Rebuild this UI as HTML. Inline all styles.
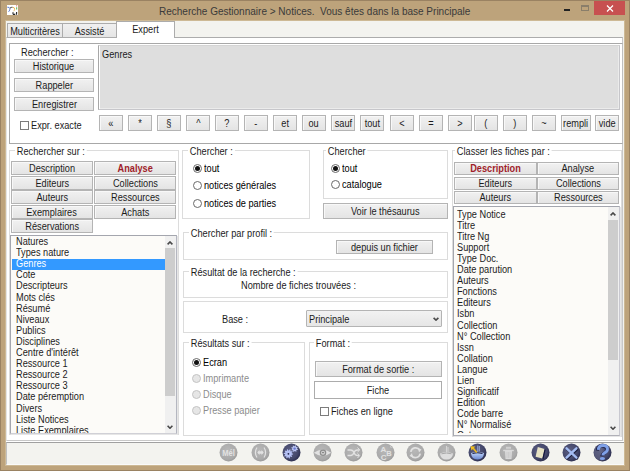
<!DOCTYPE html>
<html><head><meta charset="utf-8"><style>
html,body{margin:0;padding:0;width:630px;height:471px;overflow:hidden;background:#bda37b;}
body div, body svg{position:absolute;box-sizing:border-box;}
.t{font-family:"Liberation Sans", sans-serif;font-size:10px;line-height:11px;color:#1c1c1c;white-space:nowrap;transform:scaleX(0.92);transform-origin:0 0;}
.c{transform-origin:50% 0;}
.btn span{display:inline-block;transform:scaleX(0.92);}
.btn{border:1px solid #b4b4b4;background:linear-gradient(#f1f1f1,#e4e4e4);box-shadow:inset 1px 1px 0 #f8f8f8;font-family:"Liberation Sans", sans-serif;font-size:10px;text-align:center;color:#1c1c1c;white-space:nowrap;overflow:hidden;}
</style></head><body>
<div style="left:0;top:0;width:630px;height:471px;background:#bda37b;"></div>
<div style="left:0;top:0;width:630px;height:471px;border:1px solid #9a8262;"></div>
<div class="t" style="left:159px;top:4px;font-size:11px;line-height:14px;color:#3a3a3a;transform-origin:0 0;transform:scaleX(0.91);white-space:nowrap;">Recherche Gestionnaire &gt; Notices.&nbsp; Vous êtes dans la base Principale</div>
<div style="left:564px;top:9px;width:6px;height:2px;background:#222;"></div>
<div style="left:581px;top:5px;width:8px;height:6px;border:1px solid #8a7e6a;border-top-width:2px;"></div>
<div style="left:594px;top:1px;width:31px;height:14px;background:#c75050;"></div>
<svg style="position:absolute;left:606px;top:4.5px" width="8" height="7" viewBox="0 0 8 7"><path d="M1 0.5 L7 6.5 M7 0.5 L1 6.5" stroke="#fff" stroke-width="1.2"/></svg>
<div style="left:5px;top:20px;width:620px;height:446px;border:1px solid #cdb995;"></div>
<div style="left:6px;top:21px;width:618px;height:444px;background:#f3f3ef;"></div>
<div style="left:6px;top:37px;width:617px;height:404px;background:#fff;border-top:1px solid #acacac;border-right:1px solid #c8c8c8;border-bottom:1px solid #c8c8c8;border-left:1px solid #e4e4e4;"></div>
<div style="left:6px;top:441px;width:618px;height:1px;background:#fff;"></div>
<div style="left:7px;top:23px;width:56px;height:15px;border:1px solid #acacac;background:linear-gradient(#f0f0f0,#e5e5e5);"></div>
<div class="t c" style="left:7px;top:26px;width:56px;text-align:center;">Multicritères</div>
<div style="left:62px;top:23px;width:55px;height:15px;border:1px solid #acacac;background:linear-gradient(#f0f0f0,#e5e5e5);"></div>
<div class="t c" style="left:62px;top:26px;width:55px;text-align:center;">Assisté</div>
<div style="left:116px;top:21px;width:59px;height:17px;border:1px solid #acacac;border-bottom:none;background:#fff;"></div>
<div class="t c" style="left:116px;top:24px;width:59px;text-align:center;">Expert</div>
<div style="left:9px;top:43px;width:614px;height:101px;border:1px solid #a8a8a8;border-right-color:#c0c0c0;"></div>
<div class="t" style="left:21px;top:47px;">Rechercher :</div>
<div class="btn" style="left:14px;top:59px;width:80px;height:14px;line-height:13px;"><span style="">Historique</span></div>
<div class="btn" style="left:14px;top:78px;width:80px;height:14px;line-height:13px;"><span style="">Rappeler</span></div>
<div class="btn" style="left:14px;top:97px;width:80px;height:14px;line-height:13px;"><span style="">Enregistrer</span></div>
<div style="left:98px;top:45px;width:522px;height:65px;background:#dedede;border:1px solid #a8a8a8;border-top-color:#d4d4d4;border-right-color:#c6c6ca;border-bottom-color:#c6c6ca;box-shadow:inset 1px 0 0 #fff, inset -1px -1px 0 #ebebeb;"></div>
<div class="t" style="left:102px;top:49px;">Genres</div>
<div style="left:20px;top:121px;width:9px;height:9px;border:1px solid #7c7c7c;background:#fff;"></div>
<div class="t" style="left:31px;top:120px;">Expr. exacte</div>
<div class="btn" style="left:99px;top:115px;width:24px;height:16px;line-height:15px;"><span style="">«</span></div>
<div class="btn" style="left:128px;top:115px;width:24px;height:16px;line-height:15px;"><span style="">*</span></div>
<div class="btn" style="left:157px;top:115px;width:24px;height:16px;line-height:15px;"><span style="">§</span></div>
<div class="btn" style="left:186px;top:115px;width:24px;height:16px;line-height:15px;"><span style="">^</span></div>
<div class="btn" style="left:215px;top:115px;width:24px;height:16px;line-height:15px;"><span style="">?</span></div>
<div class="btn" style="left:244px;top:115px;width:24px;height:16px;line-height:15px;"><span style="">-</span></div>
<div class="btn" style="left:273px;top:115px;width:24px;height:16px;line-height:15px;"><span style="">et</span></div>
<div class="btn" style="left:302px;top:115px;width:24px;height:16px;line-height:15px;"><span style="">ou</span></div>
<div class="btn" style="left:331px;top:115px;width:24px;height:16px;line-height:15px;"><span style="">sauf</span></div>
<div class="btn" style="left:360px;top:115px;width:24px;height:16px;line-height:15px;"><span style="">tout</span></div>
<div class="btn" style="left:390px;top:115px;width:24px;height:16px;line-height:15px;"><span style="">&lt;</span></div>
<div class="btn" style="left:419px;top:115px;width:24px;height:16px;line-height:15px;"><span style="">=</span></div>
<div class="btn" style="left:448px;top:115px;width:24px;height:16px;line-height:15px;"><span style="">&gt;</span></div>
<div class="btn" style="left:474px;top:115px;width:24px;height:16px;line-height:15px;"><span style="">(</span></div>
<div class="btn" style="left:503px;top:115px;width:24px;height:16px;line-height:15px;"><span style="">)</span></div>
<div class="btn" style="left:532px;top:115px;width:24px;height:16px;line-height:15px;"><span style="">~</span></div>
<div class="btn" style="left:561px;top:115px;width:30px;height:16px;line-height:15px;"><span style="">rempli</span></div>
<div class="btn" style="left:595px;top:115px;width:24px;height:16px;line-height:15px;"><span style="">vide</span></div>
<div style="left:9px;top:150px;width:170px;height:285px;border:1px solid #dcdcdc;"></div>
<div class="t" style="left:15px;top:145.5px;padding:0 2px;background:#fff;">Rechercher sur :</div>
<div class="btn" style="left:11px;top:161px;width:82px;height:14px;line-height:13px;"><span style="">Description</span></div>
<div class="btn" style="left:94px;top:161px;width:82px;height:14px;line-height:13px;"><span style="color:#a01e2a;font-weight:bold;">Analyse</span></div>
<div class="btn" style="left:11px;top:176px;width:82px;height:14px;line-height:13px;"><span style="">Editeurs</span></div>
<div class="btn" style="left:94px;top:176px;width:82px;height:14px;line-height:13px;"><span style="">Collections</span></div>
<div class="btn" style="left:11px;top:190px;width:82px;height:14px;line-height:13px;"><span style="">Auteurs</span></div>
<div class="btn" style="left:94px;top:190px;width:82px;height:14px;line-height:13px;"><span style="">Ressources</span></div>
<div class="btn" style="left:11px;top:205px;width:82px;height:14px;line-height:13px;"><span style="">Exemplaires</span></div>
<div class="btn" style="left:94px;top:205px;width:82px;height:14px;line-height:13px;"><span style="">Achats</span></div>
<div class="btn" style="left:11px;top:219px;width:82px;height:14px;line-height:13px;"><span style="">Réservations</span></div>
<div style="left:10px;top:235px;width:167px;height:199px;background:#fcfbf8;border:1px solid #a4a6ae;border-right-color:#b4b6c0;border-bottom-color:#d0d0d6;box-shadow:1px 1px 0 #e6e6e6;"></div>
<div style="left:11px;top:236px;width:154px;height:197px;overflow:hidden;">
<div class="t" style="left:5px;top:0.0px;">Natures</div>
<div class="t" style="left:5px;top:11.1px;">Types nature</div>
<div style="left:1px;top:22.5px;width:153px;height:11px;background:#3399ff;"></div>
<div class="t" style="left:5px;top:22.2px;color:#fff;">Genres</div>
<div class="t" style="left:5px;top:33.3px;">Cote</div>
<div class="t" style="left:5px;top:44.4px;">Descripteurs</div>
<div class="t" style="left:5px;top:55.5px;">Mots clés</div>
<div class="t" style="left:5px;top:66.6px;">Résumé</div>
<div class="t" style="left:5px;top:77.7px;">Niveaux</div>
<div class="t" style="left:5px;top:88.8px;">Publics</div>
<div class="t" style="left:5px;top:99.9px;">Disciplines</div>
<div class="t" style="left:5px;top:111.0px;">Centre d'intérêt</div>
<div class="t" style="left:5px;top:122.1px;">Ressource 1</div>
<div class="t" style="left:5px;top:133.2px;">Ressource 2</div>
<div class="t" style="left:5px;top:144.3px;">Ressource 3</div>
<div class="t" style="left:5px;top:155.4px;">Date péremption</div>
<div class="t" style="left:5px;top:166.5px;">Divers</div>
<div class="t" style="left:5px;top:177.6px;">Liste Notices</div>
<div class="t" style="left:5px;top:188.7px;">Liste Exemplaires</div>
</div>
<div style="left:165px;top:236px;width:11px;height:197px;background:#f0f0f0;"></div>
<div style="left:165px;top:248px;width:10px;height:148px;background:#cdcdcd;"></div>
<div style="left:182px;top:150px;width:128px;height:69px;border:1px solid #dcdcdc;"></div>
<div class="t" style="left:188px;top:145.5px;padding:0 2px;background:#fff;">Chercher :</div>
<div style="left:193px;top:164px;width:9px;height:9px;border:1px solid #6a6a6a;border-radius:50%;background:#fff;box-sizing:border-box;"><div style="position:absolute;left:1px;top:1px;width:5px;height:5px;border-radius:50%;background:#111;"></div></div>
<div class="t" style="left:204px;top:162.5px;color:#000;">tout</div>
<div style="left:193px;top:181px;width:9px;height:9px;border:1px solid #6a6a6a;border-radius:50%;background:#fff;box-sizing:border-box;"></div>
<div class="t" style="left:204px;top:179.5px;color:#000;">notices générales</div>
<div style="left:193px;top:199px;width:9px;height:9px;border:1px solid #6a6a6a;border-radius:50%;background:#fff;box-sizing:border-box;"></div>
<div class="t" style="left:204px;top:197.5px;color:#000;">notices de parties</div>
<div style="left:323px;top:150px;width:125px;height:49px;border:1px solid #dcdcdc;"></div>
<div class="t" style="left:326px;top:145.5px;padding:0 2px;background:#fff;">Chercher</div>
<div style="left:331px;top:164px;width:9px;height:9px;border:1px solid #6a6a6a;border-radius:50%;background:#fff;box-sizing:border-box;"><div style="position:absolute;left:1px;top:1px;width:5px;height:5px;border-radius:50%;background:#111;"></div></div>
<div class="t" style="left:342px;top:162.5px;color:#000;">tout</div>
<div style="left:331px;top:180px;width:9px;height:9px;border:1px solid #6a6a6a;border-radius:50%;background:#fff;box-sizing:border-box;"></div>
<div class="t" style="left:342px;top:178.5px;color:#000;">catalogue</div>
<div class="btn" style="left:323px;top:203px;width:125px;height:16px;line-height:15px;"><span style="">Voir le thésaurus</span></div>
<div style="left:183px;top:232px;width:265px;height:28px;border:1px solid #dcdcdc;"></div>
<div class="t" style="left:189px;top:227.5px;padding:0 2px;background:#fff;">Chercher par profil :</div>
<div class="btn" style="left:336px;top:240px;width:97px;height:14px;line-height:13px;"><span style="">depuis un fichier</span></div>
<div style="left:183px;top:271px;width:265px;height:27px;border:1px solid #dcdcdc;"></div>
<div class="t" style="left:189px;top:266.5px;padding:0 2px;background:#fff;">Résultat de la recherche :</div>
<div class="t" style="left:241px;top:280px;">Nombre de fiches trouvées :</div>
<div style="left:183px;top:301px;width:265px;height:32px;border:1px solid #dcdcdc;"></div>
<div class="t" style="left:222px;top:313.5px;">Base :</div>
<div style="left:306px;top:310px;width:136px;height:17px;border:1px solid #b4b4b4;border-radius:1px;background:linear-gradient(#f2f2f2,#e6e6e6);"></div>
<div class="t" style="left:309px;top:314px;">Principale</div>
<svg style="position:absolute;left:433px;top:317px" width="6" height="4" viewBox="0 0 6 4"><path d="M0.6 0.8 L3 3.1 L5.4 0.8" stroke="#4a4a4a" stroke-width="1.6" fill="none"/></svg>
<div style="left:183px;top:342px;width:122px;height:94px;border:1px solid #dcdcdc;"></div>
<div class="t" style="left:189px;top:337.5px;padding:0 2px;background:#fff;">Résultats sur :</div>
<div style="left:192px;top:358px;width:9px;height:9px;border:1px solid #6a6a6a;border-radius:50%;background:#fff;box-sizing:border-box;"><div style="position:absolute;left:1px;top:1px;width:5px;height:5px;border-radius:50%;background:#111;"></div></div>
<div class="t" style="left:203px;top:356.5px;color:#000;">Ecran</div>
<div style="left:192px;top:374px;width:9px;height:9px;border:1px solid #c4c4c4;border-radius:50%;background:#e6e6e6;box-sizing:border-box;"></div>
<div class="t" style="left:203px;top:372.5px;color:#8c8c8c;">Imprimante</div>
<div style="left:192px;top:390px;width:9px;height:9px;border:1px solid #c4c4c4;border-radius:50%;background:#e6e6e6;box-sizing:border-box;"></div>
<div class="t" style="left:203px;top:388.5px;color:#8c8c8c;">Disque</div>
<div style="left:192px;top:406px;width:9px;height:9px;border:1px solid #c4c4c4;border-radius:50%;background:#e6e6e6;box-sizing:border-box;"></div>
<div class="t" style="left:203px;top:404.5px;color:#8c8c8c;">Presse papier</div>
<div style="left:309px;top:342px;width:139px;height:93px;border:1px solid #dcdcdc;"></div>
<div class="t" style="left:314px;top:337.5px;padding:0 2px;background:#fff;">Format :</div>
<div class="btn" style="left:315px;top:361px;width:127px;height:16px;line-height:15px;"><span style="">Format de sortie :</span></div>
<div style="left:314px;top:381px;width:128px;height:18px;border:1px solid #acacac;background:#fff;"></div>
<div class="t c" style="left:314px;top:385px;width:128px;text-align:center;">Fiche</div>
<div style="left:320px;top:407px;width:9px;height:9px;border:1px solid #7c7c7c;background:#fff;"></div>
<div class="t" style="left:331px;top:406px;">Fiches en ligne</div>
<div style="left:452px;top:150px;width:170px;height:287px;border:1px solid #dcdcdc;"></div>
<div class="t" style="left:455px;top:145.5px;padding:0 2px;background:#fff;">Classer les fiches par :</div>
<div class="btn" style="left:454px;top:162px;width:83px;height:13px;line-height:12px;"><span style="color:#a01e2a;font-weight:bold;">Description</span></div>
<div class="btn" style="left:537px;top:162px;width:82px;height:13px;line-height:12px;"><span style="">Analyse</span></div>
<div class="btn" style="left:454px;top:177px;width:83px;height:13px;line-height:12px;"><span style="">Editeurs</span></div>
<div class="btn" style="left:537px;top:177px;width:82px;height:13px;line-height:12px;"><span style="">Collections</span></div>
<div class="btn" style="left:454px;top:191px;width:83px;height:13px;line-height:12px;"><span style="">Auteurs</span></div>
<div class="btn" style="left:537px;top:191px;width:82px;height:13px;line-height:12px;"><span style="">Ressources</span></div>
<div style="left:453px;top:206px;width:167px;height:230px;background:#fcfbf8;border:1px solid #a4a6ae;border-right-color:#c8c8d0;border-bottom-color:#b0b0b8;box-shadow:1px 1px 0 #e6e6e6;"></div>
<div style="left:454px;top:207px;width:154px;height:226px;overflow:hidden;">
<div class="t" style="left:3px;top:2px;">Type Notice</div>
<div class="t" style="left:3px;top:13px;">Titre</div>
<div class="t" style="left:3px;top:24px;">Titre Ng</div>
<div class="t" style="left:3px;top:35px;">Support</div>
<div class="t" style="left:3px;top:46px;">Type Doc.</div>
<div class="t" style="left:3px;top:57px;">Date parution</div>
<div class="t" style="left:3px;top:68px;">Auteurs</div>
<div class="t" style="left:3px;top:79px;">Fonctions</div>
<div class="t" style="left:3px;top:90px;">Editeurs</div>
<div class="t" style="left:3px;top:101px;">Isbn</div>
<div class="t" style="left:3px;top:113px;">Collection</div>
<div class="t" style="left:3px;top:124px;">N° Collection</div>
<div class="t" style="left:3px;top:135px;">Issn</div>
<div class="t" style="left:3px;top:146px;">Collation</div>
<div class="t" style="left:3px;top:157px;">Langue</div>
<div class="t" style="left:3px;top:168px;">Lien</div>
<div class="t" style="left:3px;top:179px;">Significatif</div>
<div class="t" style="left:3px;top:190px;">Edition</div>
<div class="t" style="left:3px;top:201px;">Code barre</div>
<div class="t" style="left:3px;top:212px;">N° Normalisé</div>
<div class="t" style="left:3px;top:223px;">Cote</div>
</div>
<div style="left:608px;top:207px;width:11px;height:228px;background:#f0f0f0;"></div>
<div style="left:608px;top:220px;width:10px;height:140px;background:#cdcdcd;"></div>
<div style="left:6px;top:442px;width:618px;height:23px;background:#f3f3ef;border-top:1px solid #a0a0a0;border-left:1px solid #c0c0c0;border-bottom:1px solid #fafafa;"></div>
<svg style="position:absolute;left:218.8px;top:443.2px" width="19" height="19" viewBox="0 0 19 19"><defs><radialGradient id="g0" cx="45%" cy="40%" r="60%"><stop offset="0" stop-color="#b8b8b8"/><stop offset="0.8" stop-color="#aaaaaa"/><stop offset="1" stop-color="#9a9a9a"/></radialGradient></defs><circle cx="9.5" cy="9.5" r="9" fill="url(#g0)"/><text x="3.2" y="12.8" textLength="12.6" lengthAdjust="spacingAndGlyphs" font-family="Liberation Sans" font-weight="bold" font-size="8.5" fill="#e2e2e2">Mél</text></svg>
<svg style="position:absolute;left:250.5px;top:443.2px" width="19" height="19" viewBox="0 0 19 19"><defs><radialGradient id="g1" cx="45%" cy="40%" r="60%"><stop offset="0" stop-color="#b8b8b8"/><stop offset="0.8" stop-color="#aaaaaa"/><stop offset="1" stop-color="#9a9a9a"/></radialGradient></defs><circle cx="9.5" cy="9.5" r="9" fill="url(#g1)"/><path d="M6 4.5 Q2.8 9.5 6 14.5 M13 4.5 Q16.2 9.5 13 14.5" stroke="#e2e2e2" stroke-width="1.2" fill="none"/><path d="M7.5 9.5 H11.5" stroke="#e2e2e2" stroke-width="2.4"/><path d="M6.3 9.5 L8.5 7 V12 Z M12.7 9.5 L10.5 7 V12 Z" fill="#e2e2e2"/></svg>
<svg style="position:absolute;left:282.1px;top:443.2px" width="19" height="19" viewBox="0 0 19 19"><defs><radialGradient id="g2" cx="40%" cy="40%" r="65%"><stop offset="0" stop-color="#5c5f84"/><stop offset="0.7" stop-color="#44476a"/><stop offset="1" stop-color="#2a2c4c"/></radialGradient></defs><circle cx="9.5" cy="9.5" r="9" fill="url(#g2)"/><path d="M11.10,10.80 L11.04,11.54 L9.63,11.85 L9.43,12.34 L10.20,13.56 L9.72,14.12 L8.40,13.55 L7.94,13.83 L7.85,15.27 L7.14,15.44 L6.40,14.20 L5.87,14.16 L4.95,15.27 L4.27,14.99 L4.40,13.55 L4.00,13.20 L2.60,13.56 L2.21,12.93 L3.17,11.85 L3.04,11.33 L1.70,10.80 L1.76,10.06 L3.17,9.75 L3.37,9.26 L2.60,8.04 L3.08,7.48 L4.40,8.05 L4.86,7.77 L4.95,6.33 L5.66,6.16 L6.40,7.40 L6.93,7.44 L7.85,6.33 L8.53,6.61 L8.40,8.05 L8.80,8.40 L10.20,8.04 L10.59,8.67 L9.63,9.75 L9.76,10.27 Z" fill="#b4c0f4"/><circle cx="6.4" cy="10.8" r="0.9" fill="#22244a"/><path d="M15.93,6.28 L15.74,6.91 L14.59,6.94 L14.29,7.30 L14.48,8.43 L13.89,8.75 L13.06,7.96 L12.59,8.00 L11.92,8.93 L11.29,8.74 L11.26,7.59 L10.90,7.29 L9.77,7.48 L9.45,6.89 L10.24,6.06 L10.20,5.59 L9.27,4.92 L9.46,4.29 L10.61,4.26 L10.91,3.90 L10.72,2.77 L11.31,2.45 L12.14,3.24 L12.61,3.20 L13.28,2.27 L13.91,2.46 L13.94,3.61 L14.30,3.91 L15.43,3.72 L15.75,4.31 L14.96,5.14 L15.00,5.61 Z" fill="#b8c2f0"/><circle cx="12.6" cy="5.6" r="1.2" fill="#6a78d0"/></svg>
<svg style="position:absolute;left:312.6px;top:443.2px" width="19" height="19" viewBox="0 0 19 19"><defs><radialGradient id="g3" cx="45%" cy="40%" r="60%"><stop offset="0" stop-color="#b8b8b8"/><stop offset="0.8" stop-color="#aaaaaa"/><stop offset="1" stop-color="#9a9a9a"/></radialGradient></defs><circle cx="9.5" cy="9.5" r="9" fill="url(#g3)"/><path d="M0.8 9.8 Q9.5 3.6 18.2 9.8 Q9.5 16 0.8 9.8 Z" fill="#e2e2e2"/><circle cx="10" cy="9.8" r="3.3" fill="#8e8e8e"/><circle cx="10" cy="9.8" r="2" fill="#d6d6d6"/><ellipse cx="10" cy="9.6" rx="1.2" ry="0.8" fill="#888"/></svg>
<svg style="position:absolute;left:343.8px;top:443.2px" width="19" height="19" viewBox="0 0 19 19"><defs><radialGradient id="g4" cx="45%" cy="40%" r="60%"><stop offset="0" stop-color="#b8b8b8"/><stop offset="0.8" stop-color="#aaaaaa"/><stop offset="1" stop-color="#9a9a9a"/></radialGradient></defs><circle cx="9.5" cy="9.5" r="9" fill="url(#g4)"/><path d="M3.5 7 H6.5 Q9 7 10 9.5 Q11 12.5 13.5 12.5 H15 M3.5 12.5 H6.5 Q9 12.5 10 9.5 Q11 7 13.5 7 H15" stroke="#e2e2e2" stroke-width="1.3" fill="none"/><path d="M13.5 4.5 L15.8 7 L13.5 9 M13.5 10.5 L15.8 12.5 L13.5 15" stroke="#e2e2e2" stroke-width="1" fill="none"/></svg>
<svg style="position:absolute;left:375.5px;top:443.2px" width="19" height="19" viewBox="0 0 19 19"><defs><radialGradient id="g5" cx="45%" cy="40%" r="60%"><stop offset="0" stop-color="#b8b8b8"/><stop offset="0.8" stop-color="#aaaaaa"/><stop offset="1" stop-color="#9a9a9a"/></radialGradient></defs><circle cx="9.5" cy="9.5" r="9" fill="url(#g5)"/><g font-family="Liberation Sans" font-weight="bold" fill="#e2e2e2"><text x="4.6" y="9.2" font-size="8">A</text><text x="10.2" y="13.4" font-size="7.5">B</text><text x="4.8" y="17.2" font-size="8">C</text></g><path d="M14 3.5 L15.5 4.5" stroke="#e2e2e2" stroke-width="0.8"/></svg>
<svg style="position:absolute;left:406.2px;top:443.2px" width="19" height="19" viewBox="0 0 19 19"><defs><radialGradient id="g6" cx="45%" cy="40%" r="60%"><stop offset="0" stop-color="#b8b8b8"/><stop offset="0.8" stop-color="#aaaaaa"/><stop offset="1" stop-color="#9a9a9a"/></radialGradient></defs><circle cx="9.5" cy="9.5" r="9" fill="url(#g6)"/><path d="M4.8 8.8 A4.9 4.9 0 0 1 13.8 7.2 M14.2 10.6 A4.9 4.9 0 0 1 5.2 12.2" stroke="#e2e2e2" stroke-width="1.7" fill="none"/><path d="M12 5 L15.5 6.5 L13 9.5 Z M7 14.5 L3.5 13 L6 10 Z" fill="#e2e2e2"/></svg>
<svg style="position:absolute;left:437.2px;top:443.2px" width="19" height="19" viewBox="0 0 19 19"><defs><radialGradient id="g7" cx="45%" cy="40%" r="60%"><stop offset="0" stop-color="#b8b8b8"/><stop offset="0.8" stop-color="#aaaaaa"/><stop offset="1" stop-color="#9a9a9a"/></radialGradient></defs><circle cx="9.5" cy="9.5" r="9" fill="url(#g7)"/><path d="M3 10.5 Q9.5 8 16 10.5 Q15.5 16.5 9.5 16.5 Q3.5 16.5 3 10.5 Z" fill="#dedede"/><path d="M4.5 10.8 Q9.5 9.2 14.5 10.8" stroke="#9a9a9a" stroke-width="0.8" fill="none"/><path d="M9.5 3 V9.5 M11 4 V9" stroke="#d8d8d8" stroke-width="0.9" fill="none"/></svg>
<svg style="position:absolute;left:468.4px;top:443.2px" width="19" height="19" viewBox="0 0 19 19"><defs><radialGradient id="g8" cx="40%" cy="40%" r="65%"><stop offset="0" stop-color="#5c5f84"/><stop offset="0.7" stop-color="#44476a"/><stop offset="1" stop-color="#2a2c4c"/></radialGradient></defs><circle cx="9.5" cy="9.5" r="9" fill="url(#g8)"/><defs><linearGradient id="bw" x1="0" y1="0" x2="0" y2="1"><stop offset="0" stop-color="#c8dcff"/><stop offset="1" stop-color="#6a88d0"/></linearGradient></defs><path d="M3 10 Q9.5 7.8 16 10 Q15.5 16.5 9.5 16.5 Q3.5 16.5 3 10 Z" fill="url(#bw)"/><path d="M4.5 10.5 Q9.5 9 14.5 10.5" stroke="#15173a" stroke-width="1.1" fill="none"/><path d="M8.8 9.5 L5 5" stroke="#e8b820" stroke-width="1.8"/><path d="M2.6 3.2 L7.4 3.6 L3.4 7.6 Z" fill="#f0c020"/><path d="M9.8 2.5 V9 M11.3 3 V8.5" stroke="#b0c4f0" stroke-width="0.8"/></svg>
<svg style="position:absolute;left:499.3px;top:443.2px" width="19" height="19" viewBox="0 0 19 19"><defs><radialGradient id="g9" cx="45%" cy="40%" r="60%"><stop offset="0" stop-color="#b8b8b8"/><stop offset="0.8" stop-color="#aaaaaa"/><stop offset="1" stop-color="#9a9a9a"/></radialGradient></defs><circle cx="9.5" cy="9.5" r="9" fill="url(#g9)"/><path d="M6 7.5 H13 L12.5 16 H6.5 Z" fill="#dadada"/><path d="M4.2 7.5 H14.8" stroke="#dadada" stroke-width="1.4"/><rect x="7" y="3.8" width="5" height="2" fill="#d0d0d0"/><path d="M8 9 V15 M9.5 9 V15 M11 9 V15" stroke="#c4c4c4" stroke-width="0.6"/></svg>
<svg style="position:absolute;left:530.6px;top:443.2px" width="19" height="19" viewBox="0 0 19 19"><defs><radialGradient id="g10" cx="40%" cy="40%" r="65%"><stop offset="0" stop-color="#5c5f84"/><stop offset="0.7" stop-color="#44476a"/><stop offset="1" stop-color="#2a2c4c"/></radialGradient></defs><circle cx="9.5" cy="9.5" r="9" fill="url(#g10)"/><path d="M6.8 4 L13.6 6 L11.4 15.6 L4.6 13.8 Z" fill="#e6e2c4"/><path d="M11.4 15.6 L13.6 6 L14.6 6.8 L12.4 16.6 Z" fill="#14163a"/></svg>
<svg style="position:absolute;left:561.9px;top:443.2px" width="19" height="19" viewBox="0 0 19 19"><defs><radialGradient id="g11" cx="40%" cy="40%" r="65%"><stop offset="0" stop-color="#5c5f84"/><stop offset="0.7" stop-color="#44476a"/><stop offset="1" stop-color="#2a2c4c"/></radialGradient></defs><circle cx="9.5" cy="9.5" r="9" fill="url(#g11)"/><path d="M4.6 5.4 L14.4 14.6 M14.4 5.4 L4.6 14.6" stroke="#1a1c38" stroke-width="2.6" stroke-linecap="round" transform="translate(0.6,0.8)"/><path d="M4.6 5.4 L14.4 14.6 M14.4 5.4 L4.6 14.6" stroke="#a4bcf2" stroke-width="2.5" stroke-linecap="round"/></svg>
<svg style="position:absolute;left:592.9px;top:443.2px" width="19" height="19" viewBox="0 0 19 19"><defs><radialGradient id="g12" cx="40%" cy="40%" r="65%"><stop offset="0" stop-color="#5c5f84"/><stop offset="0.7" stop-color="#44476a"/><stop offset="1" stop-color="#2a2c4c"/></radialGradient></defs><circle cx="9.5" cy="9.5" r="9" fill="url(#g12)"/><path d="M1 9.5 A8.5 8.5 0 0 1 9.5 1 L9.5 18 A8.5 8.5 0 0 1 1 9.5 Z" fill="#6a6c8a" opacity="0.45"/><path d="M5.2 6.8 Q5.6 2.4 10 2.4 Q14.4 2.4 14.4 6 Q14.4 8.6 11.6 9.8 Q9.8 10.6 9.8 12.6" stroke="#15173a" stroke-width="3" fill="none" transform="translate(-0.9,0.7)"/><path d="M5.2 6.8 Q5.6 2.4 10 2.4 Q14.4 2.4 14.4 6 Q14.4 8.6 11.6 9.8 Q9.8 10.6 9.8 12.6" stroke="#7fa0e8" stroke-width="3" fill="none"/><ellipse cx="9.4" cy="15.6" rx="2.6" ry="1.5" fill="#7fa0e8"/></svg>
<svg style="position:absolute;left:167px;top:240.5px" width="6" height="4" viewBox="0 0 6 4"><path d="M0.6 3.4 L3 1 L5.4 3.4" stroke="#484848" stroke-width="1.6" fill="none"/></svg>
<svg style="position:absolute;left:167px;top:425px" width="6" height="4" viewBox="0 0 6 4"><path d="M0.6 0.8 L3 3.2 L5.4 0.8" stroke="#484848" stroke-width="1.6" fill="none"/></svg>
<svg style="position:absolute;left:610px;top:212px" width="6" height="4" viewBox="0 0 6 4"><path d="M0.6 3.4 L3 1 L5.4 3.4" stroke="#484848" stroke-width="1.6" fill="none"/></svg>
<svg style="position:absolute;left:610px;top:426px" width="6" height="4" viewBox="0 0 6 4"><path d="M0.6 0.8 L3 3.2 L5.4 0.8" stroke="#484848" stroke-width="1.6" fill="none"/></svg>
<svg style="position:absolute;left:7px;top:5px" width="11" height="10" viewBox="0 0 11 10"><rect width="11" height="10" fill="#fff"/><path d="M0.3 2.2 Q2.5 2 3 3.5 Q3.2 5 1.6 6.8" stroke="#6080d0" stroke-width="1" fill="none"/><path d="M2.8 3.2 Q4 2 5.6 2.3" stroke="#505050" stroke-width="1" fill="none"/><path d="M5.8 2.2 Q8 2.6 7.6 4.4 Q7.2 5.6 6.8 6.2" stroke="#f0b850" stroke-width="1" fill="none"/><path d="M9.6 2.2 V4.6" stroke="#70c070" stroke-width="1.2"/><path d="M9.6 0 V1.6" stroke="#f0a0a0" stroke-width="1.2"/><path d="M6.2 7.2 Q5.6 8.6 6.6 9.6 Q7.8 9.8 8 8.6 M9.6 7 V9.8" stroke="#222" stroke-width="1.1" fill="none"/></svg>
</body></html>
